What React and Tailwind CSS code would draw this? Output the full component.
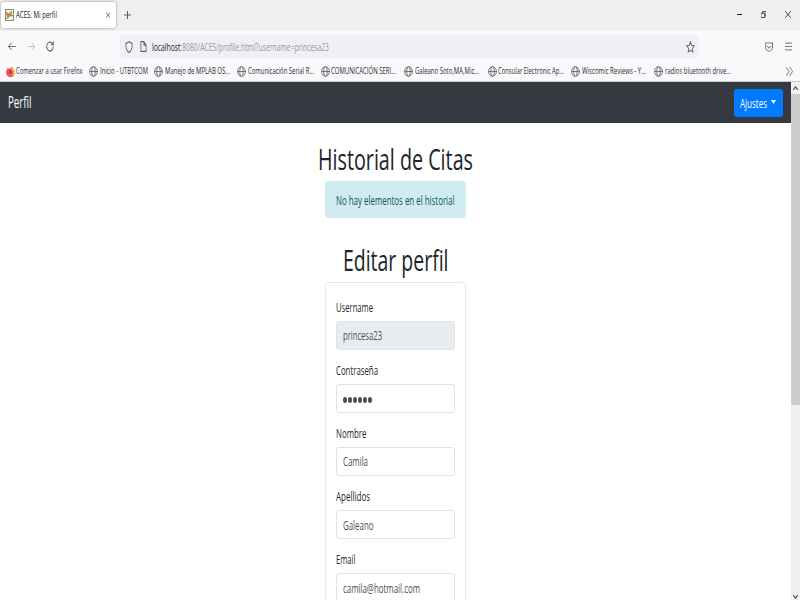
import { useLayoutEffect, useRef } from "react";

// Condenses its text horizontally so that it fills the width set by className.
function Fit({ className, children }) {
  const outer = useRef(null);
  const inner = useRef(null);
  useLayoutEffect(() => {
    const el = inner.current;
    el.style.transform = "none";
    const ratio = outer.current.getBoundingClientRect().width / el.getBoundingClientRect().width;
    el.style.transform = `scaleX(${ratio})`;
  }, [children]);
  return (
    <span ref={outer} className={`block shrink-0 whitespace-nowrap ${className}`}>
      <span ref={inner} className="inline-block origin-left">{children}</span>
    </span>
  );
}

function Icon({ className, box = "0 0 16 16", children, width = 1.3 }) {
  return (
    <svg className={`block shrink-0 ${className}`} viewBox={box} preserveAspectRatio="none" fill="none" stroke="currentColor" strokeWidth={width} strokeLinecap="round" strokeLinejoin="round">
      {children}
    </svg>
  );
}

function Globe() {
  return (
    <Icon className="h-[11px] w-[9px] text-[#666670]" width={1.4}>
      <circle cx="8" cy="8" r="7" />
      <ellipse cx="8" cy="8" rx="3.2" ry="7" />
      <path d="M1.3 8h13.4" />
    </Icon>
  );
}

function Firefox() {
  return (
    <svg className="block h-[11px] w-[9px] shrink-0" viewBox="0 0 16 16" preserveAspectRatio="none">
      <path d="M2 4l1-2 2 2c2-1 4-1 5-3 3 2 6 5 5.500 9A7.500 7 0 0 1 .5 9C.5 7 1 5 2 4z" fill="#ff5a36" />
      <path d="M10 1c3 2 6 5 5.500 9-.5 2-2 4-4 5 2-5 1-9-3-11 1-1 1.500-2 1.500-3z" fill="#ffbd2e" />
      <path d="M1 7c0 6 4 8.500 8 8.500-4 0-7-3-7-7z" fill="#e31587" />
      <circle cx="8" cy="8.500" r="3" fill="#7542c8" />
    </svg>
  );
}

const bookmarks = [
  { text: "Comenzar a usar Firefox", item: "w-[83.5px] gap-[1.5px]", fit: "w-[66.5px]", firefox: true },
  { text: "Inicio - UTBTCOM", item: "w-[64.5px] gap-[1.5px]", fit: "w-[48px]" },
  { text: "Manejo de MPLAB OS...", item: "w-[83.5px] gap-[2px]", fit: "w-[65px]" },
  { text: "Comunicación Serial R...", item: "w-[83.5px] gap-[1.5px]", fit: "w-[66px]" },
  { text: "COMUNICACIÓN SERI...", item: "w-[83.5px] gap-[1.5px]", fit: "w-[65px]" },
  { text: "Galeano Soto,MA,Mic...", item: "w-[83.5px] gap-[2px]", fit: "w-[64px]" },
  { text: "Consular Electronic Ap...", item: "w-[83px] gap-[1px]", fit: "w-[66px]" },
  { text: "Wiscomic Reviews - Y...", item: "w-[83.5px] gap-[2px]", fit: "w-[64px]" },
  { text: "radios bluetooth drive...", item: "w-[83.5px] gap-[1.5px]", fit: "w-[66px]" },
];

const fields = [
  { label: "Username", labelFit: "w-[37px]", value: "princesa23", fit: "w-[39px]", disabled: true },
  { label: "Contraseña", labelFit: "w-[42px]", password: true },
  { label: "Nombre", labelFit: "w-[30.5px]", value: "Camila", fit: "w-[25px]" },
  { label: "Apellidos", labelFit: "w-[34px]", value: "Galeano", fit: "w-[30.5px]" },
  { label: "Email", labelFit: "w-[19.5px]", value: "camila@hotmail.com", fit: "w-[77px]" },
];

function TabStrip() {
  return (
    <div className="flex h-[31px] items-start bg-[#f0f0f0] text-[#15141a]">
      <div className="ml-px mt-[2px] flex h-[26px] w-[115px] items-center rounded-[3px] bg-white pl-[4px] pr-[6px] shadow-[0_0_3px_rgba(0,0,0,0.4)]">
        <svg className="block h-[12px] w-[9px]" viewBox="0 0 9 12">
          <rect x=".5" y=".5" width="8" height="11" fill="#f3efe5" stroke="#8d8a85" />
          <path d="M1.500 3l2 2 3.500-3-1 3 2 2-3 0-3.500 3 1-3-1-1z" fill="#b98935" stroke="#94733c" strokeWidth=".4" />
        </svg>
        <Fit className="ml-[2px] w-[41px] pt-px text-[9.4px]">ACES: Mi perfil</Fit>
        <Icon className="ml-auto h-[6px] w-[4.5px] text-[#44444c]" width={2}><path d="M1 1l14 14M15 1L1 15" /></Icon>
      </div>
      <Icon className="ml-[8px] mt-[11px] h-[8px] w-[7px] text-[#55555f]" width={2}><path d="M8 0v16M0 8h16" /></Icon>
      <div className="ml-auto mr-[9px] flex h-[29px] items-center">
        <span className="block h-px w-[5px] bg-[#222]" />
        <Icon className="ml-[19px] h-[7px] w-[5.5px]" width={1.9}><path d="M1 5h10v10H1zM5 5V1h10v10h-4" /></Icon>
        <Icon className="ml-[19px] h-[7px] w-[6px]" width={1.8}><path d="M1 1l14 14M15 1L1 15" /></Icon>
      </div>
    </div>
  );
}

function Toolbar() {
  return (
    <div className="flex h-[31px] items-center bg-[#f9f9fb] text-[#5b5b66]">
      <Icon className="ml-[8px] h-[9px] w-[8px]" width={1.7}><path d="M15 8H1M7 2L1 8l6 6" /></Icon>
      <Icon className="ml-[12px] h-[9px] w-[7px] text-[#b9b9bf]" width={1.7}><path d="M1 8h14M9 2l6 6-6 6" /></Icon>
      <Icon className="ml-[11px] h-[11px] w-[8px]" width={1.7}><path d="M14.500 8A6.500 6.500 0 1 1 12 3l2.500 2M14.500 1v4.500H10" /></Icon>
      <div className="ml-[66px] flex h-[23px] w-[578px] items-center rounded-[3px] bg-[#f0f0f4] pl-[4.5px] pr-[3px]">
        <Icon className="h-[12px] w-[8px]" width={1.5}><path d="M8 1l6.500 2.500C14.500 9 13 13 8 15.300 3 13 1.500 9 1.500 3.500z" /></Icon>
        <Icon className="ml-[7.5px] h-[11px] w-[7px]" width={1.8}><path d="M2 1h7l5 5v9H2zM9 1v5h5" /></Icon>
        <Fit className="ml-[5px] w-[177px] pt-[2px] text-[10px] text-[#96969e]">
          <span className="text-[#15141a]">localhost</span>:8080/ACES/profile.html?username=princesa23
        </Fit>
        <Icon className="ml-auto h-[12px] w-[9px]" width={1.4}><path d="M8 1l2.100 4.600 4.900.6-3.600 3.500 1 5.100L8 12.300l-4.400 2.500 1-5.100L1 6.200l4.900-.6z" /></Icon>
      </div>
      <Icon className="ml-[67px] h-[10px] w-[8px]" width={1.5}><path d="M1 1.500h14V8c0 9-14 9-14 0zM4.500 6.500L8 10l3.500-3.500" /></Icon>
      <Icon className="ml-[11.5px] h-[9px] w-[7px]" width={1.7}><path d="M0 2h16M0 8h16M0 14h16" /></Icon>
    </div>
  );
}

function Bookmarks() {
  return (
    <div className="flex h-[20px] items-center border-b border-[#c5c6ca] bg-[#f9f9fb] pl-[5.5px] text-[8.8px] text-[#2b2a33]">
      {bookmarks.map((b) => (
        <div key={b.text} className={`flex shrink-0 items-center ${b.item}`}>
          {b.firefox ? <Firefox /> : <Globe />}
          <Fit className={`pt-px ${b.fit}`}>{b.text}</Fit>
        </div>
      ))}
      <Icon className="ml-[48px] h-[9px] w-[7px] text-[#5b5b66]" width={1.6}><path d="M1 1l6 7-6 7M9 1l6 7-6 7" /></Icon>
    </div>
  );
}

function Field({ field }) {
  return (
    <div className="h-[63.1px] shrink-0">
      <div className="h-[19px] text-[12px] leading-[20px]">
        <Fit className={field.labelFit}>{field.label}</Fit>
      </div>
      <div className={`mt-[4px] flex h-[28.5px] items-center rounded-[3px] border border-[#dfe2e6] pl-[6px] text-[12px] text-[#495057] ${field.disabled ? "bg-[#e9ecef]" : "bg-white"}`}>
        {field.password ? (
          <div className="flex gap-px pt-[4px]">
            {[0, 1, 2, 3, 4, 5].map((n) => <span key={n} className="h-[6px] w-[4px] rounded-[50%] bg-[#495057]" />)}
          </div>
        ) : (
          <Fit className={`pt-[2px] ${field.fit}`}>{field.value}</Fit>
        )}
      </div>
    </div>
  );
}

function Scrollbar() {
  return (
    <div className="flex w-[9px] shrink-0 flex-col items-center bg-[#f0f0f0] text-[#505050]">
      <Icon className="mt-[4px] h-[4px] w-[5px]" width={4}><path d="M2 14l6-11 6 11" /></Icon>
      <div className="mt-[4px] h-[311px] w-full bg-[#cdcdcd]" />
      <Icon className="mb-px mt-auto h-[4px] w-[5px]" width={4}><path d="M2 2l6 11 6-11" /></Icon>
    </div>
  );
}

export default function App() {
  return (
    <div className="flex h-[600px] w-[800px] flex-col overflow-hidden bg-white font-['Open_Sans','Noto_Sans',sans-serif] text-[#212529]">
      <TabStrip />
      <Toolbar />
      <Bookmarks />
      <div className="flex min-h-0 flex-1">
        <div className="flex w-[791px] flex-col overflow-hidden">
          <nav className="flex h-[41px] shrink-0 items-center justify-between bg-[#343a40] px-[8px] pt-px text-white">
            <Fit className="w-[23.5px] text-[15.5px]">Perfil</Fit>
            <button className="flex h-[28px] w-[49.5px] items-center rounded-[3px] bg-[#007bff] pl-[6.5px] text-[12px]">
              <Fit className="w-[27px] pt-px">Ajustes</Fit>
              <svg className="-mt-[2px] ml-[4px] block h-[4px] w-[5px]" viewBox="0 0 5 4"><path d="M0 0h5L2.500 4z" fill="currentColor" /></svg>
            </button>
          </nav>
          <main className="flex min-h-0 flex-1 flex-col items-center">
            <h1 className="mt-[17px] h-[41px] shrink-0 text-[29.5px] leading-[38px]"><Fit className="w-[155px]">Historial de Citas</Fit></h1>
            <div className="flex h-[37px] w-[141px] shrink-0 items-center justify-center rounded-[3px] border border-[#cdebf0] bg-[#d1ecf1] pt-[3px] text-[12px] text-[#0c5460]">
              <Fit className="w-[118.5px]">No hay elementos en el historial</Fit>
            </div>
            <h1 className="mt-[23px] h-[41px] shrink-0 text-[29.5px] leading-[38px]"><Fit className="w-[105.5px]">Editar perfil</Fit></h1>
            <form className="flex h-[400px] w-[141px] shrink-0 flex-col rounded-[3px] border border-[#e8e8e8] px-[10.2px] pt-[15px]">
              {fields.map((f) => <Field key={f.label} field={f} />)}
            </form>
          </main>
        </div>
        <Scrollbar />
      </div>
    </div>
  );
}
